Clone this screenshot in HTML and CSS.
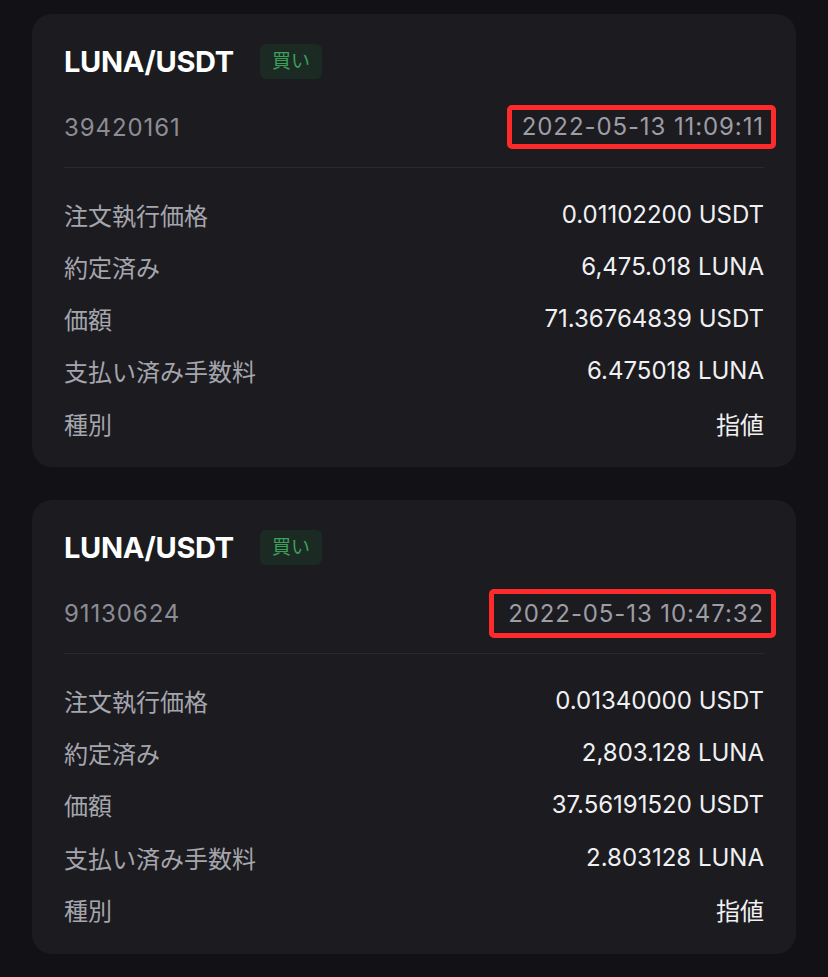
FILE: index.html
```html
<!DOCTYPE html>
<html lang="ja">
<head>
    <meta charset="UTF-8">
    <meta name="viewport" content="width=device-width, initial-scale=1.0">
    <title>取引履歴</title>
    <link rel="stylesheet" href="styles.css">
</head>
<body>

    <div class="trade-list">

        <div class="trade-card">
            <div class="trade-head">
                <div class="title-row">
                    <h2>LUNA/USDT</h2>
                    <span class="side buy">買い</span>
                </div>
                <div class="id-row">
                    <span class="order-id">39420161</span>
                    <span class="time marked">2022-05-13 11:09:11</span>
                </div>
            </div>
            <div class="trade-body">
                <div class="row"><span class="label">注文執行価格</span><span class="value">0.01102200 USDT</span></div>
                <div class="row"><span class="label">約定済み</span><span class="value">6,475.018 LUNA</span></div>
                <div class="row"><span class="label">価額</span><span class="value">71.36764839 USDT</span></div>
                <div class="row"><span class="label">支払い済み手数料</span><span class="value">6.475018 LUNA</span></div>
                <div class="row"><span class="label">種別</span><span class="value">指値</span></div>
            </div>
        </div>

        <div class="trade-card">
            <div class="trade-head">
                <div class="title-row">
                    <h2>LUNA/USDT</h2>
                    <span class="side buy">買い</span>
                </div>
                <div class="id-row">
                    <span class="order-id">91130624</span>
                    <span class="time marked loose">2022-05-13 10:47:32</span>
                </div>
            </div>
            <div class="trade-body">
                <div class="row"><span class="label">注文執行価格</span><span class="value">0.01340000 USDT</span></div>
                <div class="row"><span class="label">約定済み</span><span class="value">2,803.128 LUNA</span></div>
                <div class="row"><span class="label">価額</span><span class="value">37.56191520 USDT</span></div>
                <div class="row"><span class="label">支払い済み手数料</span><span class="value">2.803128 LUNA</span></div>
                <div class="row"><span class="label">種別</span><span class="value">指値</span></div>
            </div>
        </div>

    </div>

</body>
</html>
```

FILE: styles.css
```css
body {
    margin: 0;
    background-color: #111116;
    font-family: 'Inter', 'Noto Sans CJK JP', sans-serif;
    color: #eaecef;
}

.trade-list {
    padding: 14px 32px;
    display: flex;
    flex-direction: column;
    gap: 33px;
}

.trade-card {
    background-color: #1b1b20;
    border-radius: 20px;
    padding: 0 32px;
}

.trade-head {
    padding: 26px 0 18px;
    border-bottom: 1px solid #2a2a31;
}

.title-row {
    display: flex;
    align-items: center;
    height: 42px;
}

.title-row h2 {
    margin: 0;
    font-size: 29px;
    font-weight: 700;
    color: #ffffff;
    letter-spacing: -0.3px;
}

.side {
    margin-left: 26px;
    height: 35px;
    padding: 0 12px;
    border-radius: 6px;
    font-size: 19px;
    line-height: 35px;
}

.side.buy {
    background-color: #1b2a22;
    color: #3d9f5c;
}

.id-row {
    margin-top: 23px;
    height: 44px;
    display: flex;
    justify-content: space-between;
    align-items: center;
    font-size: 24px;
    letter-spacing: 0.9px;
    color: #8c8c95;
}

.time {
    color: #9d9da5;
}

.marked {
    border: 5px solid #ff2b2b;
    border-radius: 5px;
    padding: 0 7px 0 10px;
    margin-right: -12px;
    line-height: 34px;
}

.marked.loose {
    padding-left: 14px;
    line-height: 39px;
}

.trade-body {
    padding: 20px 0 18px;
}

.row {
    height: 52.25px;
    display: flex;
    justify-content: space-between;
    align-items: center;
    font-size: 24px;
}

.label {
    color: #a5a5ad;
}

.value {
    color: #f0f0f2;
}
```
